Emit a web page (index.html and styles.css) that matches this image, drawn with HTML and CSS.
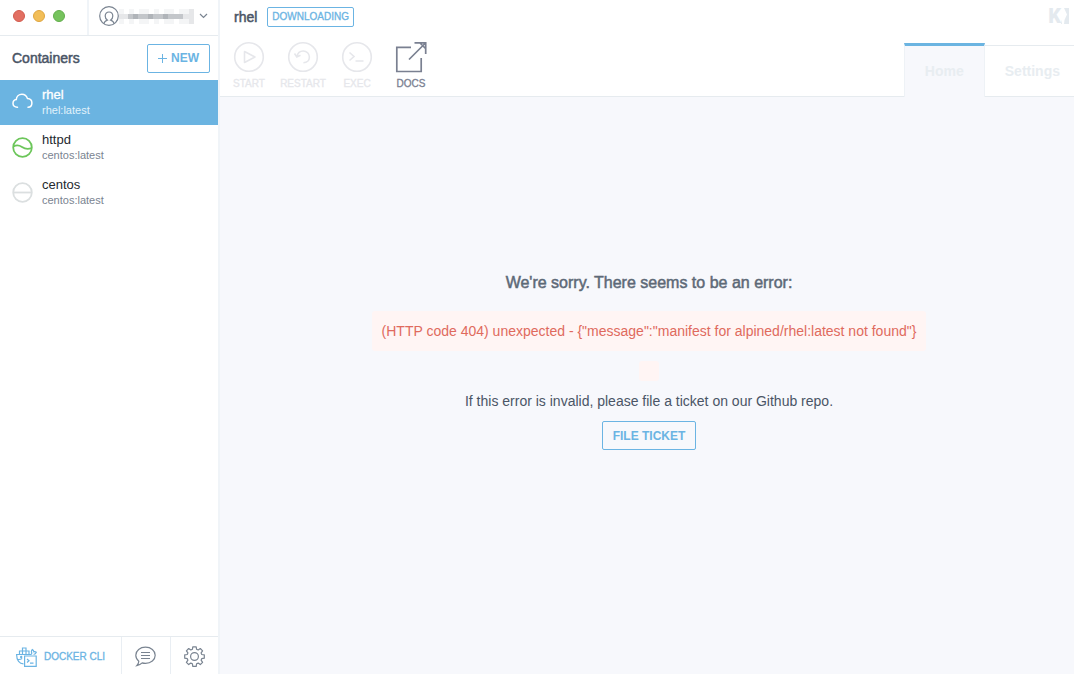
FILE: index.html
```html
<!DOCTYPE html>
<html lang="en">
<head>
<meta charset="utf-8">
<meta name="viewport" content="width=device-width, initial-scale=1">
<title>Kitematic</title>
<link rel="stylesheet" href="styles.css">
</head>
<body>
<div class="app">
  <aside class="sidebar">
    <div class="titlebar">
      <div class="window-buttons">
        <button class="dot dot-close" type="button" aria-label="Close"></button>
        <button class="dot dot-minimize" type="button" aria-label="Minimize"></button>
        <button class="dot dot-zoom" type="button" aria-label="Zoom"></button>
      </div>
      <button class="account" type="button" aria-label="Account">
        <svg class="avatar" width="20" height="20" viewBox="0 0 20 20" fill="none" stroke="#7a8491" stroke-width="1.2">
          <circle cx="10" cy="10" r="9.3"/>
          <path d="M5 17.800c.2-2 1-2.900 3.300-3.700-1.500-1-2.100-2.300-2.100-4C6.200 7.700 7.700 6 10 6s3.800 1.700 3.800 4.100c0 1.700-.6 3-2.100 4 2.300.8 3.100 1.700 3.300 3.700"/>
        </svg>
        <svg class="username" width="75" height="15" viewBox="0 0 75 15" shape-rendering="crispEdges">
          <path fill="#f4f5f6" d="M0 0h5v15H0zM10 0h5v15h-5zM20 0h10v15H20zM35 0h5v15h-5zM45 0h10v15H45zM60 0h15v15H60z"/>
          <path fill="#e6e7e9" d="M0 5h75v5H0zM70 0h5v15h-5z"/>
          <path fill="#c3c6ca" d="M9 5h55v5H9z"/>
          <path fill="#b0b4b9" d="M14 5h5v5h-5zM29 5h5v5h-5zM44 5h5v5h-5z"/>
        </svg>
        <svg width="9" height="6" viewBox="0 0 9 6" fill="none" stroke="#7a8491" stroke-width="1.200"><path d="M1 1l3.500 3.500L8 1"/></svg>
      </button>
    </div>

    <div class="list-header">
      <h2 class="list-title">Containers</h2>
      <button class="outline-button new-button" type="button">
        <svg width="9" height="9" viewBox="0 0 9 9" stroke="#6bb4e3" stroke-width="1"><path d="M4.500 0v9M0 4.500h9"/></svg>
        NEW
      </button>
    </div>

    <nav class="containers">
      <a class="container-item selected" href="#rhel">
        <svg width="21" height="21" viewBox="0 0 21 21" fill="none" stroke="#fff" stroke-width="1.500" stroke-linecap="round">
          <path d="M5.500 15.200C2.800 15.400 1 13.700 1 11.400c0-2 1.300-3.500 3.300-3.800C4.400 4.400 6.800 2.200 9.900 2.200c2.900 0 4.700 1.600 5.500 4.200 2.700.2 4.500 2 4.500 4.500s-1.600 4.200-3.900 4.300"/>
        </svg>
        <span class="names"><span class="name">rhel</span><span class="image">rhel:latest</span></span>
      </a>
      <a class="container-item" href="#httpd">
        <svg width="21" height="21" viewBox="0 0 21 21" fill="none" stroke="#6cc65a" stroke-width="1.800">
          <circle cx="10.500" cy="10.500" r="9.300"/>
          <path d="M1.500 9.500c3-1.700 5.500-1.500 8.500.5s6 2.500 9.500 1"/>
        </svg>
        <span class="names"><span class="name">httpd</span><span class="image">centos:latest</span></span>
      </a>
      <a class="container-item" href="#centos">
        <svg width="21" height="21" viewBox="0 0 21 21" fill="none" stroke="#dbdfe0" stroke-width="1.800">
          <circle cx="10.500" cy="10.500" r="9.300"/>
          <path d="M1.500 10.500h18"/>
        </svg>
        <span class="names"><span class="name">centos</span><span class="image">centos:latest</span></span>
      </a>
    </nav>

    <div class="toolbar">
      <button class="tool tool-cli" type="button">
        <svg width="21" height="20" viewBox="0 0 21 20" fill="none" stroke="#6bb4e3" stroke-width="1.200">
          <path d="M6.500 1h3.500v3H6.500zM3.500 4h3v3.500h-3zM6.500 4H10v3.500H6.500zM10 4h3v3.500h-3z"/>
          <path d="M7.500 16.800C3.500 16.800.6 13.500.6 7.500h14c1-.2 1.300-.8 1-2-.4-1.300 0-2.400.8-3 1 .6 1.400 1.400 1.400 2.300 1-.2 1.900 0 2.500.5-.5 1.400-1.400 2-2.700 2.200M1.200 12.300c2 .5 3.500.2 5-.8"/>
          <circle cx="5.200" cy="10" r=".6"/>
          <path d="M8.600 9h11.600v10.300H8.600zM11 12l2 1.800-2 1.700M14 16.200h3.500"/>
        </svg>
        DOCKER CLI
      </button>
      <button class="tool tool-icon" type="button" aria-label="Feedback">
        <svg width="21" height="21" viewBox="0 0 21 21" fill="none" stroke="#7a8491" stroke-width="1.200">
          <path d="M3.800 15.200C1.900 13.700.8 11.600.8 9.300.8 4.700 5.100 1.200 10.500 1.200s9.700 3.500 9.700 8.100-4.300 8.100-9.700 8.100c-1.200 0-2.300-.1-3.300-.5-1.300 1.400-3 2.300-5.400 2.700 1.200-1.200 1.900-2.600 2-4.400z"/>
          <path d="M6 6.500h9M6 9.500h9M6 12.500h9"/>
        </svg>
      </button>
      <button class="tool tool-icon" type="button" aria-label="Preferences">
        <svg width="21" height="21" viewBox="0 0 21 21" fill="none" stroke="#7a8491" stroke-width="1.200" stroke-linejoin="round">
          <path d="M8.800.8h3.400l.4 2.500 1.600.7 2.100-1.500 2.300 2.300-1.500 2.100.7 1.600 2.500.4v3.300l-2.500.4-.7 1.600 1.500 2.100-2.300 2.300-2.100-1.500-1.600.7-.4 2.500H8.800l-.4-2.500-1.600-.7-2.100 1.500-2.300-2.300 1.500-2.100-.7-1.600-2.500-.4V8.900l2.500-.4.7-1.600-1.500-2.100 2.300-2.300L6.800 4l1.600-.7z"/>
          <circle cx="10.500" cy="10.500" r="3.900"/>
        </svg>
      </button>
    </div>
  </aside>

  <main class="main">
    <header class="header">
      <div class="details">
        <div class="title-row">
          <h1 class="title">rhel</h1>
          <span class="status">DOWNLOADING</span>
        </div>
        <div class="actions">
          <button class="action" type="button" disabled>
            <svg width="32" height="32" viewBox="0 0 32 32" fill="none" stroke="currentColor" stroke-width="1.600">
              <circle cx="16" cy="16" r="14.300"/><path d="M11.500 10.500v11L22 16z" stroke-linejoin="round"/>
            </svg>
            START
          </button>
          <button class="action" type="button" disabled>
            <svg width="32" height="32" viewBox="0 0 32 32" fill="none" stroke="currentColor" stroke-width="1.600">
              <circle cx="16" cy="16" r="14.300"/><path d="M10 15.500c.6-3.300 3-5.500 6.200-5.500 3.500 0 6.200 2.600 6.200 6s-2.500 5.700-6 5.700M7.500 12.500l2.300 3.500 3.700-1.700"/>
            </svg>
            RESTART
          </button>
          <button class="action" type="button" disabled>
            <svg width="32" height="32" viewBox="0 0 32 32" fill="none" stroke="currentColor" stroke-width="1.600">
              <circle cx="16" cy="16" r="14.300"/><path d="M8.500 11.500l4.500 4-4.500 4M14.500 20h8"/>
            </svg>
            EXEC
          </button>
          <button class="action action-docs" type="button">
            <svg width="32" height="32" viewBox="0 0 32 32" fill="none" stroke="currentColor" stroke-width="1.700">
              <path d="M16 6.300H1.800v24.200h24.400V17M14 18.500L30.500 2M19.500 1.800h11.200V13M25 2l5.500 5.500"/>
            </svg>
            DOCS
          </button>
        </div>
      </div>
      <div class="header-side">
        <div class="logo" role="img" aria-label="Kitematic">
          <span class="logo-letter">K</span>
          <svg width="8" height="16" viewBox="0 0 8 16" fill="#e4eaef"><path d="M3 0h5v16H3l.5-4L6 6.500zM0 11.500L1 16H0z"/></svg>
        </div>
        <nav class="tabs">
          <a class="tab active" href="#home">Home</a>
          <a class="tab" href="#settings">Settings</a>
        </nav>
      </div>
    </header>

    <section class="error">
      <h3 class="error-title">We're sorry. There seems to be an error:</h3>
      <p class="error-message">(HTTP code 404) unexpected - {"message":"manifest for alpined/rhel:latest not found"}</p>
      <p class="error-empty"></p>
      <p class="error-hint">If this error is invalid, please file a ticket on our Github repo.</p>
      <button class="outline-button" type="button">FILE TICKET</button>
    </section>
  </main>
</div>
</body>
</html>
```
FILE: styles.css
```css
* { box-sizing: border-box; }
body {
  margin: 0;
  font-family: "Liberation Sans", Arial, sans-serif;
  font-size: 13px;
  color: #4a5566;
}
h1, h2, h3, p { margin: 0; }
h1, h2, h3 { font-weight: normal; -webkit-text-stroke: 0.5px; }
a { color: inherit; text-decoration: none; }
svg { display: block; flex: none; }
button {
  margin: 0;
  padding: 0;
  border: 0;
  background: none;
  color: inherit;
  font: inherit;
}
.app { display: flex; min-height: 100vh; background: #f7f8fc; }

/* Sidebar */
.sidebar {
  display: flex;
  flex: none;
  flex-direction: column;
  width: 220px;
  border-right: 2px solid #f0f4f8;
  background: #fff;
}
.titlebar { display: flex; height: 36px; border-bottom: 1px solid #e6ebef; }
.window-buttons {
  display: flex;
  gap: 8px;
  width: 91px;
  padding: 10px 13px;
  border-right: 2px solid #f0f4f8;
}
.dot { width: 12px; height: 12px; border: 1px solid; border-radius: 50%; }
.dot-close { border-color: #d25b4e; background: #e26f62; }
.dot-minimize { border-color: #dfa640; background: #f2be58; }
.dot-zoom { border-color: #63ae4d; background: #76c35d; }
.account { display: flex; flex: 1; align-items: center; padding: 0 10px 3px; }
.username { margin-right: 5px; }

.list-header {
  display: flex;
  align-items: center;
  justify-content: space-between;
  height: 44px;
  padding: 0 8px 0 12px;
}
.list-title { font-size: 14px; line-height: 16px; }
.outline-button {
  display: flex;
  align-items: center;
  height: 29px;
  padding: 0 10px;
  border: 1px solid #6bb4e3;
  border-radius: 2px;
  color: #6bb4e3;
  font-size: 12px;
  font-weight: bold;
}
.new-button { gap: 4px; }

.containers { flex: 1; }
.container-item { display: flex; align-items: center; gap: 9px; height: 45px; padding: 0 12px; }
.container-item.selected { background: #6bb4e1; }
.names { display: flex; flex-direction: column; }
.name { color: #24292e; line-height: 16px; }
.image { color: #7a8491; font-size: 11px; line-height: 15px; }
.selected .name { color: #fff; -webkit-text-stroke: 0.3px; }
.selected .image { color: #e0f2fb; }

.toolbar { display: flex; height: 38px; border-top: 1px solid #e6ebef; }
.tool { display: flex; align-items: center; justify-content: center; padding-top: 2px; }
.tool + .tool { border-left: 1px solid #e9eef3; }
.tool-cli {
  gap: 7px;
  width: 121px;
  color: #6bb4e3;
  font-size: 10px;
  -webkit-text-stroke: 0.3px;
}
.tool-icon { flex: 1; }

/* Header */
.main { display: flex; flex: 1; flex-direction: column; min-width: 0; }
.header {
  display: flex;
  height: 97px;
  background: #fff;
}
.details { flex: 1; border-bottom: 1px solid #e6ebef; }
.title-row { display: flex; align-items: center; gap: 10px; height: 34px; padding: 0 14px; }
.title { font-size: 14px; line-height: 16px; }
.status {
  height: 20px;
  padding: 0 4px;
  border: 1px solid #6bb4e3;
  border-radius: 2px;
  color: #6bb4e3;
  font-size: 10px;
  line-height: 18px;
  -webkit-text-stroke: 0.3px;
}
.actions { display: flex; padding: 7px 2px 0; }
.action {
  display: flex;
  flex-direction: column;
  align-items: center;
  gap: 5px;
  width: 54px;
  color: #e6e7eb;
  font-size: 10px;
  line-height: 12px;
  -webkit-text-stroke: 0.3px;
}
.action-docs { color: #7a8091; }
.header-side { display: flex; flex-direction: column; justify-content: space-between; }
.logo { display: flex; align-self: flex-end; align-items: center; padding: 8px 5px 0 0; }
.logo-letter {
  color: #e4eaef;
  font: 900 20px/16px Roboto, sans-serif;
}
.tabs { display: flex; align-items: flex-end; }
.tab {
  height: 52px;
  padding: 0 14px 0 20px;
  border: 1px solid #e6ebef;
  border-width: 1px 0;
  color: #e8edf1;
  font-size: 14px;
  font-weight: bold;
  line-height: 50px;
}
.tab.active {
  height: 54px;
  padding: 0 20px;
  border: 1px solid #eef2f6;
  border-top: 3px solid #6bb4e1;
  border-bottom: 0;
  background: #f7f8fc;
}

/* Error panel */
.error {
  display: flex;
  flex: 1;
  flex-direction: column;
  align-items: center;
  justify-content: center;
  padding: 0 20px 48px 24px;
  text-align: center;
}
.error-title { color: #5d6977; font-size: 16px; line-height: 20px; }
.error-message {
  margin-top: 18px;
  padding: 10px;
  border-radius: 3px;
  background: #fff5f4;
  color: #e06a5d;
  font-size: 14px;
  line-height: 20px;
}
.error-empty {
  margin-top: 10px;
  padding: 10px;
  border-radius: 3px;
  background: #fff5f4;
}
.error-hint { margin: 10px 0; font-size: 14px; line-height: 20px; }
```
